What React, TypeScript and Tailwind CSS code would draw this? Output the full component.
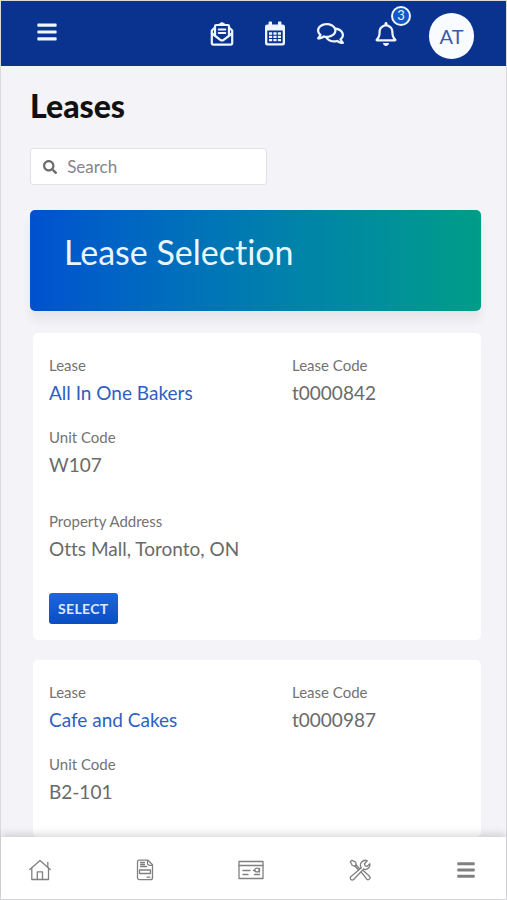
import React, { useState } from 'react';
import { FaBars, FaRegBell, FaRegComments, FaSearch } from 'react-icons/fa';

type Lease = {
  id: number;
  name: string;
  code: string;
  unit: string;
  address?: string;
};

const leases: Lease[] = [
  { id: 1, name: 'All In One Bakers', code: 't0000842', unit: 'W107', address: 'Otts Mall, Toronto, ON' },
  { id: 2, name: 'Cafe and Cakes', code: 't0000987', unit: 'B2-101' },
];

const MailIcon = () => (
  <svg viewBox="0 0 24 24" className="h-6 w-6" fill="none" stroke="currentColor" strokeWidth="2.2" strokeLinejoin="round" strokeLinecap="round">
    <path d="M5 5.500 1.800 8.500V21a1.600 1.600 0 0 0 1.600 1.600h17.200a1.600 1.600 0 0 0 1.600-1.600V8.500L19 5.500" />
    <path d="M5 13.500V4.200A1.200 1.200 0 0 1 6.200 3h11.600A1.200 1.200 0 0 1 19 4.200v9.300" />
    <path d="m2 11.500 8.300 6.300a2.800 2.800 0 0 0 3.400 0L22 11.500" />
    <path d="M9.500 2.600 12 1.200l2.500 1.400" />
    <path d="M8.700 7.500h6.600M8.700 11h6.600" strokeWidth="2" />
  </svg>
);

const CalendarIcon = () => (
  <svg viewBox="0 0 22 25" className="h-[25px] w-[22px]" fill="currentColor">
    <path
      fillRule="evenodd"
      d="M4.600 1.200a.8.8 0 0 1 .8-.8h1.800a.8.8 0 0 1 .8.8V3.500h6V1.200a.8.8 0 0 1 .8-.8h1.800a.8.8 0 0 1 .8.8V3.500h1.300A2.300 2.300 0 0 1 21 5.800v16.400a2.300 2.300 0 0 1-2.300 2.300H3.300A2.300 2.300 0 0 1 1 22.200V5.800a2.300 2.300 0 0 1 2.300-2.300h1.300zM3.300 9.500v12.100c0 .4.200.6.600.6h14.200c.4 0 .6-.2.600-.6V9.500z"
    />
    <path d="M5 11.300h3.200v2.500H5zM9.400 11.300h3.200v2.500H9.400zM13.800 11.300H17v2.500h-3.200zM5 14.700h3.200v2.300H5zM9.400 14.700h3.200v2.300H9.400zM13.800 14.700H17v2.300h-3.200zM5 17.900h3.200v2.300H5zM9.400 17.900h3.200v2.300H9.400zM13.800 17.900H17v2.300h-3.200z" />
  </svg>
);

const HomeIcon = () => (
  <svg viewBox="0 0 22 22" className="h-[22px] w-[22px]" fill="none" stroke="currentColor" strokeWidth="1.300" strokeLinejoin="round" strokeLinecap="round">
    <path d="M.8 10.500 11 1.500l10.200 9" />
    <path d="M2.800 9v11.500h16.700V9" />
    <path d="M8.300 20.500v-7.700h5.200v7.700" />
    <path d="M18.800 8V3.500" />
  </svg>
);

const DocumentIcon = () => (
  <svg viewBox="0 0 18 22" className="h-[22px] w-[18px]" fill="none" stroke="currentColor" strokeWidth="1.300" strokeLinejoin="round" strokeLinecap="round">
    <path d="M3 1.200h9l4.500 4.500v13a2 2 0 0 1-2 2H3.500a2 2 0 0 1-2-2V2.700A1.500 1.500 0 0 1 3 1.200z" />
    <path d="M11.500 1.500v3a1.800 1.800 0 0 0 1.800 1.800h3" />
    <path d="M4.500 3.500h4M4.500 5.500h4M4.500 7.500h6M11 18.200h3" />
    <path d="M3.500 11h11v3.500h-11z" />
  </svg>
);

const ChequeIcon = () => (
  <svg viewBox="0 0 26 20" className="h-5 w-[26px]" fill="none" stroke="currentColor" strokeWidth="1.300" strokeLinejoin="round" strokeLinecap="round">
    <path d="M1 1.500h24v17H1z" />
    <path d="M1 5.500h24" />
    <path d="M5 10.500h7M5 14.500h5M16.500 14.500h5" />
    <path d="M15.500 10.500h1.500M21.500 8.500v3.500" />
    <ellipse cx="19" cy="10" rx="2.300" ry="1.900" />
  </svg>
);

const ToolsIcon = () => (
  <svg viewBox="0 0 22 22" className="h-[22px] w-[22px]" fill="none" stroke="currentColor" strokeWidth="1.300" strokeLinejoin="round" strokeLinecap="round">
    <path d="M12.300 8.800a4.800 4.800 0 0 1 6-7l-2.800 3 .6 2.100 2.100.5 2.600-2.700a4.800 4.800 0 0 1-6.300 5.500" />
    <path d="m12.300 8.800-10.500 9a1.900 1.900 0 0 0 2.800 2.700l9.900-10.300" />
    <path d="M1.300 2.700 3 1.200l3.600 1.900.7 2.500-1.700 1.600-2.300-.7z" />
    <path d="m7 6 3.500 3.500M5.800 7l3.600 3.800" />
    <path d="m12.300 13.200 5.500 7a2 2 0 0 0 2.900-2.700l-6.500-6" />
  </svg>
);

const Field = ({ label, children }: { label: string; children: React.ReactNode }) => (
  <div>
    <dt className="text-[15px] leading-6 text-[#737373]">{label}</dt>
    <dd className="text-[19px] leading-8 text-[#6a6a6a]">{children}</dd>
  </div>
);

const LeaseCard = ({ lease }: { lease: Lease }) => (
  <article className="rounded-[5px] bg-white px-4 pt-5 pb-4 last:flex-1">
    <dl className="grid grid-cols-[243px_1fr] gap-y-4">
      <Field label="Lease">
        <a href="#lease" className="text-[#2d5fc4]">{lease.name}</a>
      </Field>
      <Field label="Lease Code">{lease.code}</Field>
      <div className="col-span-2">
        <Field label="Unit Code">{lease.unit}</Field>
      </div>
      {lease.address && (
        <div className="col-span-2 mt-3">
          <Field label="Property Address">{lease.address}</Field>
        </div>
      )}
    </dl>
    {lease.address && (
      <button
        type="button"
        className="mt-7 h-[31px] rounded-[3px] bg-gradient-to-b from-[#1f66d8] to-[#0a4dc4] px-[9px] text-sm font-bold tracking-wide text-[#dceaff]"
      >
        SELECT
      </button>
    )}
  </article>
);

const App = () => {
  const [search, setSearch] = useState('');

  return (
    <div className="flex h-screen flex-col border border-[#d9d9de] bg-[#f3f3f8] font-['Lato','Open_Sans',sans-serif] [font-variant-ligatures:none]">
      <header className="flex h-[65px] shrink-0 items-center justify-between bg-[#0a338f] pr-8 pl-[35px] text-[#eef6ff]">
        <button type="button" aria-label="Menu" className="pb-1">
          <FaBars className="h-[22px] w-[22px]" />
        </button>
        <div className="flex items-center">
          <button type="button" aria-label="Mail" className="mr-[30px]">
            <MailIcon />
          </button>
          <button type="button" aria-label="Calendar" className="mr-[31px]">
            <CalendarIcon />
          </button>
          <button type="button" aria-label="Messages" className="mr-[31px]">
            <FaRegComments className="h-[27px] w-[27px]" />
          </button>
          <button type="button" aria-label="Notifications" className="relative mr-8">
            <FaRegBell className="h-6 w-[22px]" />
            <span className="absolute -top-4 left-4 flex h-5 w-5 items-center justify-center rounded-full border-2 border-[#eef6ff] bg-[#1259c8] text-[13px] leading-none">
              3
            </span>
          </button>
          <button type="button" aria-label="Account" className="mt-1 h-[46px] w-[45px] rounded-full bg-[#f8fbff] text-xl text-[#3b5ca8]">
            AT
          </button>
        </div>
      </header>

      <main className="flex min-h-0 flex-1 flex-col overflow-hidden pt-[22px] pr-[25px] pl-[29px]">
        <h1 className="text-[32px] leading-9 font-black text-[#111]">Leases</h1>
        <label className="mt-6 flex h-[37px] w-[237px] shrink-0 items-center gap-[10px] rounded-[3px] border border-[#e1e1e6] bg-white px-3">
          <FaSearch className="h-4 w-4 text-[#6c6c6c]" />
          <input
            type="search"
            aria-label="Search"
            placeholder="Search"
            value={search}
            onChange={(event) => setSearch(event.target.value)}
            className="w-full min-w-0 bg-transparent text-[17px] outline-none placeholder:text-[#85858a]"
          />
        </label>

        <section className="mt-[25px] h-[101px] shrink-0 rounded-[5px] bg-gradient-to-r from-[#0050d0] to-[#009d88] px-[34px] pt-[22px] shadow-[0_9px_10px_rgba(0,0,0,0.06)]">
          <h2 className="text-[34px] leading-10 text-[#eaf6ff]">Lease Selection</h2>
        </section>

        <div className="mt-[22px] flex flex-1 flex-col gap-5 pl-[3px]">
          {leases.map((lease) => (
            <LeaseCard key={lease.id} lease={lease} />
          ))}
        </div>
      </main>

      <nav className="relative flex h-[62px] shrink-0 items-center justify-between bg-white pr-[29px] pl-7 pt-1 text-[#808080] shadow-[0_-3px_8px_rgba(0,0,0,0.15)]">
        <a href="#home" aria-label="Home"><HomeIcon /></a>
        <a href="#documents" aria-label="Documents"><DocumentIcon /></a>
        <a href="#payments" aria-label="Payments"><ChequeIcon /></a>
        <a href="#maintenance" aria-label="Maintenance"><ToolsIcon /></a>
        <button type="button" aria-label="More">
          <FaBars className="h-5 w-[22px]" />
        </button>
      </nav>
    </div>
  );
};

export default App;
